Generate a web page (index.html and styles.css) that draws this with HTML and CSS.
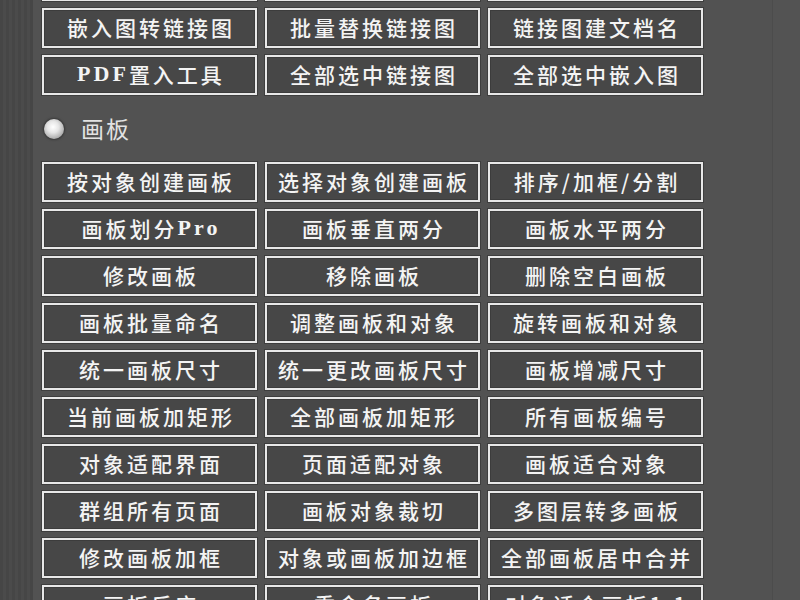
FILE: index.html
```html
<!DOCTYPE html>
<html lang="zh-CN">
<head>
<meta charset="utf-8">
<title>工具面板</title>
<link rel="stylesheet" href="styles.css">
</head>
<body>
<div class="app">
  <div class="strip"></div>
  <div class="panel">
    <div class="grid grid-top">
      <div class="btn"></div>
      <div class="btn"></div>
      <div class="btn"></div>
      <div class="btn">嵌入图转链接图</div>
      <div class="btn">批量替换链接图</div>
      <div class="btn">链接图建文档名</div>
      <div class="btn"><span class="lat">PDF</span>置入工具</div>
      <div class="btn">全部选中链接图</div>
      <div class="btn">全部选中嵌入图</div>
    </div>
    <div class="section-head">
      <span class="radio"></span>
      <span class="section-title">画板</span>
    </div>
    <div class="grid">
      <div class="btn">按对象创建画板</div>
      <div class="btn">选择对象创建画板</div>
      <div class="btn">排序/加框/分割</div>
      <div class="btn">画板划分<span class="lat">Pro</span></div>
      <div class="btn">画板垂直两分</div>
      <div class="btn">画板水平两分</div>
      <div class="btn">修改画板</div>
      <div class="btn">移除画板</div>
      <div class="btn">删除空白画板</div>
      <div class="btn">画板批量命名</div>
      <div class="btn">调整画板和对象</div>
      <div class="btn">旋转画板和对象</div>
      <div class="btn">统一画板尺寸</div>
      <div class="btn">统一更改画板尺寸</div>
      <div class="btn">画板增减尺寸</div>
      <div class="btn">当前画板加矩形</div>
      <div class="btn">全部画板加矩形</div>
      <div class="btn">所有画板编号</div>
      <div class="btn">对象适配界面</div>
      <div class="btn">页面适配对象</div>
      <div class="btn">画板适合对象</div>
      <div class="btn">群组所有页面</div>
      <div class="btn">画板对象裁切</div>
      <div class="btn">多图层转多画板</div>
      <div class="btn">修改画板加框</div>
      <div class="btn">对象或画板加边框</div>
      <div class="btn">全部画板居中合并</div>
      <div class="btn">画板反序</div>
      <div class="btn">重命名画板</div>
      <div class="btn">对象适合画板1:1</div>
    </div>
  </div>
  <div class="sidebar"></div>
</div>
</body>
</html>
```

FILE: styles.css
```css
html, body {
  margin: 0;
  padding: 0;
  background: #525252;
  overflow: hidden;
}

.app {
  display: flex;
  width: 800px;
  height: 600px;
  overflow: hidden;
  font-family: "Noto Sans CJK SC", "Noto Sans", sans-serif;
}

.strip {
  width: 33px;
  flex: none;
  background: repeating-linear-gradient(90deg, #464646 0 3px, #4b4b4b 3px 6px);
}

.panel {
  width: 739px;
  flex: none;
  padding-left: 9px;
  box-sizing: border-box;
}

.grid {
  display: grid;
  grid-template-columns: repeat(3, 215px);
  grid-auto-rows: 40px;
  column-gap: 8px;
  row-gap: 7px;
}

.grid-top {
  margin-top: -39px;
}

.btn {
  box-sizing: border-box;
  border: 2px solid #e8e8e8;
  box-shadow: 0 0 0 1px #3e3e3e, inset 0 0 0 1px #3c3c3c;
  background: #474747;
  color: #f4f4f4;
  font-size: 21px;
  font-weight: 500;
  letter-spacing: 3px;
  display: flex;
  align-items: center;
  justify-content: center;
  white-space: nowrap;
  line-height: 1;
  padding-left: 3px;
  padding-bottom: 2px;
}

.lat {
  font-family: "Liberation Serif", "DejaVu Serif", serif;
  font-weight: 700;
  font-size: 22px;
  letter-spacing: 3px;
}

.section-head {
  height: 67px;
  display: flex;
  align-items: center;
  padding-left: 2px;
  gap: 17px;
}

.radio {
  width: 20px;
  height: 20px;
  border-radius: 50%;
  background: radial-gradient(circle at 45% 40%, #ffffff 0, #e6e6e6 35%, #a8a8a8 75%, #6a6a6a 100%);
  box-shadow: 0 0 2px 1px #3a3a3a;
}

.section-title {
  color: #e2e2e2;
  font-size: 23px;
  letter-spacing: 2px;
  line-height: 1;
}

.sidebar {
  flex: 1;
  background: #535353;
  border-left: 1px solid #4c4c4c;
}
```
